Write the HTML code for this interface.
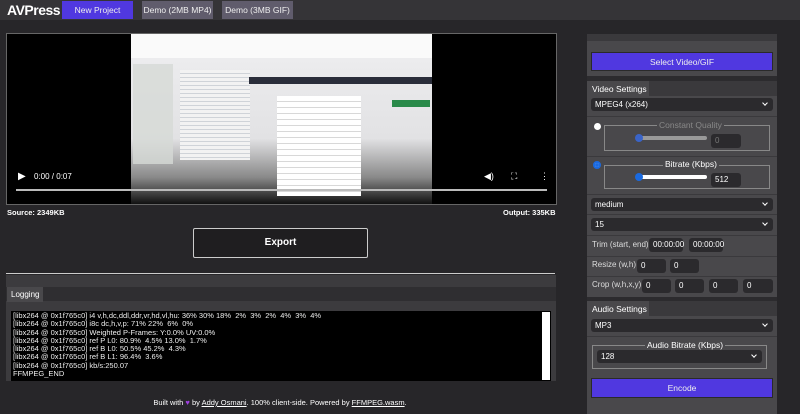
<!DOCTYPE html>
<html><head><style>
*{box-sizing:border-box;margin:0;padding:0}
body{width:800px;height:414px;background:#272629;font-family:"Liberation Sans",sans-serif;position:relative;overflow:hidden;color:#fff}
.a{position:absolute}
.hdr{left:0;top:0;width:800px;height:20px;background:#353437}
.btn{font-size:8.5px;text-align:center;line-height:18px;color:#eee}
.sel{background:#2b2a2d;border-radius:3px;font-size:8px;line-height:13px;padding-left:4px;color:#fff}
.sel:after{content:"";position:absolute;right:6px;top:3px;width:3px;height:3px;border-right:1.5px solid #fff;border-bottom:1.5px solid #fff;transform:rotate(45deg)}
.inp{background:#2b2a2d;border-radius:3px;font-size:8px;line-height:14px;padding-left:4px}
.lbl{font-size:8px;color:#ddd}
.sep{left:587px;width:190px;height:1px;background:#3a393c}
fieldset{position:absolute;border:1px solid #888;}
</style></head><body>
<div class="a hdr"></div>
<div class="a" style="left:7px;top:2px;font-size:14px;font-weight:bold;letter-spacing:-0.5px">AVPress</div>
<div class="a btn" style="left:62px;top:1px;width:71px;background:#5038e0">New Project</div>
<div class="a btn" style="left:142px;top:1px;width:71px;background:#605c6c">Demo (2MB MP4)</div>
<div class="a btn" style="left:222px;top:1px;width:71px;background:#605c6c">Demo (3MB GIF)</div>

<div class="a" style="left:6px;top:33px;width:551px;height:172px;background:#000;border:1px solid #666"></div>
<div class="a" style="left:131px;top:34px;width:301px;height:170px;background:#fafafa"></div>
<div class="a" style="left:131px;top:58px;width:301px;height:146px;background:linear-gradient(#ececee 0%,#e2e2e4 55%,#888 82%,#111 100%)"></div>
<div class="a" style="left:133px;top:64px;width:40px;height:100px;background:#d6d9d6;opacity:.8"></div>
<div class="a" style="left:180px;top:70px;width:70px;height:90px;background:repeating-linear-gradient(#f2f2f2 0 3px,#cfd3d8 3px 4px)"></div>
<div class="a" style="left:249px;top:77px;width:183px;height:7px;background:#2a2d3a"></div>
<div class="a" style="left:277px;top:96px;width:84px;height:100px;background:repeating-linear-gradient(#fff 0 5px,#d8d8d8 5px 6px)"></div>
<div class="a" style="left:392px;top:100px;width:38px;height:7px;background:#2a8a4a"></div>
<div class="a" style="left:18px;top:171px;font-size:10px">▶</div>
<div class="a" style="left:34px;top:172px;font-size:8px">0:00 / 0:07</div>
<div class="a" style="left:484px;top:171px;font-size:9px">◀)</div>
<div class="a" style="left:511px;top:171px;font-size:9px">⛶</div>
<div class="a" style="left:540px;top:171px;font-size:9px">⋮</div>
<div class="a" style="left:16px;top:189px;width:531px;height:2px;background:#bbb"></div>
<div class="a" style="left:7px;top:208px;font-size:7.5px;font-weight:bold">Source: 2349KB</div>
<div class="a" style="left:503px;top:208px;font-size:7.5px;font-weight:bold">Output: 335KB</div>
<div class="a" style="left:193px;top:228px;width:175px;height:30px;border:1px solid #ccc;background:#1f1e20;border-radius:2px;font-size:10px;font-weight:bold;text-align:center;line-height:28px">Export</div>

<div class="a" style="left:6px;top:273px;width:549px;height:1px;background:#ccc"></div>
<div class="a" style="left:6px;top:275px;width:550px;height:106px;background:#3c3b3e"></div>
<div class="a" style="left:6px;top:287px;width:550px;height:14px;background:#2f2e31"></div>
<div class="a" style="left:7px;top:287px;width:36px;height:15px;background:#49484b;font-size:8px;line-height:15px;padding-left:4px">Logging</div>
<div class="a" style="left:11px;top:311px;width:540px;height:70px;background:#000;font-size:7.5px;line-height:8.3px;padding:1px 2px;color:#eee">[libx264 @ 0x1f765c0] i4 v,h,dc,ddl,ddr,vr,hd,vl,hu: 36% 30% 18% &nbsp;2% &nbsp;3% &nbsp;2% &nbsp;4% &nbsp;3% &nbsp;4%<br>[libx264 @ 0x1f765c0] i8c dc,h,v,p: 71% 22% &nbsp;6% &nbsp;0%<br>[libx264 @ 0x1f765c0] Weighted P-Frames: Y:0.0% UV:0.0%<br>[libx264 @ 0x1f765c0] ref P L0: 80.9% &nbsp;4.5% 13.0% &nbsp;1.7%<br>[libx264 @ 0x1f765c0] ref B L0: 50.5% 45.2% &nbsp;4.3%<br>[libx264 @ 0x1f765c0] ref B L1: 96.4% &nbsp;3.6%<br>[libx264 @ 0x1f765c0] kb/s:250.07<br>FFMPEG_END</div>
<div class="a" style="left:542px;top:312px;width:8px;height:68px;background:#fff"></div>
<div class="a" style="left:0;top:398px;width:560px;text-align:center;font-size:7.5px">Built with <span style="color:#a040e0">♥</span> by <u>Addy Osmani</u>. 100% client-side. Powered by <u>FFMPEG.wasm</u>.</div>

<div class="a" style="left:587px;top:34px;width:190px;height:380px;background:#49484b"></div>
<div class="a" style="left:587px;top:34px;width:190px;height:7px;background:#3a393c"></div>
<div class="a btn" style="left:591px;top:52px;width:182px;height:19px;background:#5038e0;border:1px solid #2a2a2a">Select Video/GIF</div>
<div class="a" style="left:587px;top:76px;width:190px;height:5px;background:#2c2b2e"></div>
<div class="a" style="left:587px;top:81px;width:190px;height:15px;background:#3a393c"></div>
<div class="a" style="left:587px;top:81px;width:62px;height:16px;background:#49484b;font-size:8.5px;line-height:16px;padding-left:5px">Video Settings</div>
<div class="a sel" style="left:591px;top:98px;width:182px">MPEG4 (x264)</div>
<div class="a sep" style="top:116px"></div>
<div class="a" style="left:594px;top:123px;width:7px;height:7px;border-radius:50%;background:#fff"></div>
<fieldset style="left:604px;top:125px;width:166px;height:26px"></fieldset>
<div class="a" style="left:657px;top:120px;background:#49484b;padding:0 2px;font-size:8.5px;color:#888">Constant Quality</div>
<div class="a" style="left:637px;top:136px;width:70px;height:4px;background:#999;border-radius:2px"></div>
<div class="a" style="left:635px;top:134px;width:8px;height:8px;border-radius:50%;background:#3a64c8"></div>
<div class="a inp" style="left:711px;top:134px;width:30px;color:#777">0</div>
<div class="a sep" style="top:156px"></div>
<div class="a" style="left:593px;top:161px;width:8px;height:8px;border-radius:50%;background:#fff;border:2px solid #1a6ae0"></div>
<div class="a" style="left:595px;top:163px;width:4px;height:4px;border-radius:50%;background:#1a6ae0"></div>
<fieldset style="left:604px;top:165px;width:166px;height:24px"></fieldset>
<div class="a" style="left:663px;top:159px;background:#49484b;padding:0 2px;font-size:8.5px">Bitrate (Kbps)</div>
<div class="a" style="left:637px;top:175px;width:70px;height:4px;background:#fff;border-radius:2px"></div>
<div class="a" style="left:635px;top:173px;width:8px;height:8px;border-radius:50%;background:#1a6ae0"></div>
<div class="a inp" style="left:711px;top:173px;width:30px">512</div>
<div class="a sep" style="top:194px"></div>
<div class="a sel" style="left:591px;top:198px;width:182px">medium</div>
<div class="a sep" style="top:214px"></div>
<div class="a sel" style="left:591px;top:218px;width:182px">15</div>
<div class="a sep" style="top:235px"></div>
<div class="a lbl" style="left:592px;top:240px">Trim (start, end)</div>
<div class="a inp" style="left:649px;top:238px;width:34px">00:00:00</div>
<div class="a inp" style="left:689px;top:238px;width:34px">00:00:00</div>
<div class="a sep" style="top:256px"></div>
<div class="a lbl" style="left:592px;top:260px">Resize (w,h)</div>
<div class="a inp" style="left:637px;top:259px;width:29px">0</div>
<div class="a inp" style="left:670px;top:259px;width:29px">0</div>
<div class="a sep" style="top:276px"></div>
<div class="a lbl" style="left:592px;top:280px">Crop (w,h,x,y)</div>
<div class="a inp" style="left:642px;top:279px;width:29px">0</div>
<div class="a inp" style="left:675px;top:279px;width:29px">0</div>
<div class="a inp" style="left:709px;top:279px;width:29px">0</div>
<div class="a inp" style="left:743px;top:279px;width:30px">0</div>
<div class="a" style="left:587px;top:297px;width:190px;height:4px;background:#2c2b2e"></div>
<div class="a" style="left:587px;top:301px;width:190px;height:15px;background:#3a393c"></div>
<div class="a" style="left:587px;top:301px;width:62px;height:16px;background:#49484b;font-size:8.5px;line-height:16px;padding-left:5px">Audio Settings</div>
<div class="a sel" style="left:591px;top:319px;width:182px">MP3</div>
<div class="a sep" style="top:336px"></div>
<fieldset style="left:592px;top:345px;width:175px;height:24px"></fieldset>
<div class="a" style="left:645px;top:340px;background:#49484b;padding:0 2px;font-size:8.5px">Audio Bitrate (Kbps)</div>
<div class="a sel" style="left:597px;top:350px;width:165px">128</div>
<div class="a btn" style="left:591px;top:378px;width:182px;height:20px;background:#5038e0;border:1px solid #2a2a2a;line-height:18px">Encode</div>
</body></html>
